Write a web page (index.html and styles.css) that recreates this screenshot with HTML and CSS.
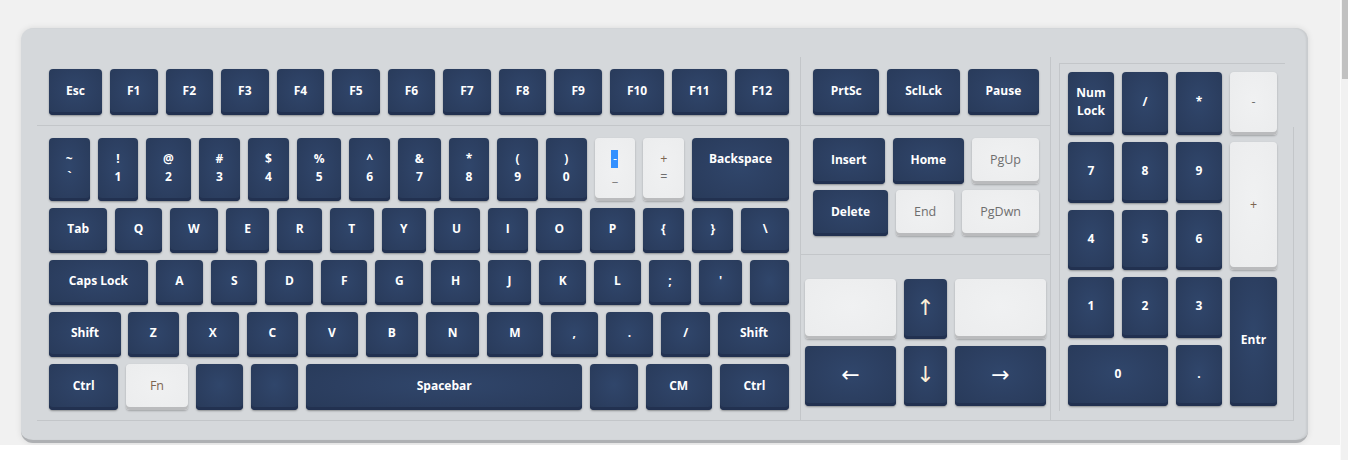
FILE: index.html
```html
<!DOCTYPE html>
<html>
<head>
<meta charset="utf-8">
<link rel="stylesheet" href="styles.css">
</head>
<body>
<div class="page">
  <div class="keyboard">
    <div class="deck">
      <div class="main-top">
        <div class="row fn-row">
          <div class="key">Esc</div>
          <div class="key">F1</div><div class="key">F2</div><div class="key">F3</div>
          <div class="key">F4</div><div class="key">F5</div><div class="key">F6</div>
          <div class="key">F7</div><div class="key">F8</div><div class="key">F9</div>
          <div class="key fx">F10</div><div class="key fx">F11</div><div class="key fx">F12</div>
        </div>
      </div>
      <div class="nav-top">
        <div class="row fn-row">
          <div class="key">PrtSc</div><div class="key">SclLck</div><div class="key">Pause</div>
        </div>
      </div>
      <div class="numcol">
        <div class="numframe">
          <div class="numpad">
            <div class="key two"><span>Num</span><span>Lock</span></div>
            <div class="key">/</div>
            <div class="key">*</div>
            <div class="key light">-</div>
            <div class="key">7</div><div class="key">8</div><div class="key">9</div>
            <div class="key light tall warm">+</div>
            <div class="key">4</div><div class="key">5</div><div class="key">6</div>
            <div class="key">1</div><div class="key">2</div><div class="key">3</div>
            <div class="key tall">Entr</div>
            <div class="key wide">0</div>
            <div class="key">.</div>
          </div>
        </div>
      </div>
      <div class="main-bottom">
        <div class="row num-row">
          <div class="key two"><span>~</span><span>`</span></div>
          <div class="key two"><span>!</span><span>1</span></div>
          <div class="key two"><span>@</span><span>2</span></div>
          <div class="key two"><span>#</span><span>3</span></div>
          <div class="key two"><span>$</span><span>4</span></div>
          <div class="key two"><span>%</span><span>5</span></div>
          <div class="key two"><span>^</span><span>6</span></div>
          <div class="key two"><span>&amp;</span><span>7</span></div>
          <div class="key two"><span>*</span><span>8</span></div>
          <div class="key two"><span>(</span><span>9</span></div>
          <div class="key two"><span>)</span><span>0</span></div>
          <div class="key two light"><span><span class="sel">-</span></span><span>_</span></div>
          <div class="key two light"><span class="warm">+</span><span>=</span></div>
          <div class="key two"><span>Backspace</span><span>&nbsp;</span></div>
        </div>
        <div class="row">
          <div class="key">Tab</div>
          <div class="key">Q</div><div class="key">W</div><div class="key">E</div><div class="key">R</div>
          <div class="key">T</div><div class="key">Y</div><div class="key">U</div><div class="key">I</div>
          <div class="key">O</div><div class="key">P</div><div class="key">{</div><div class="key">}</div>
          <div class="key bs">\</div>
        </div>
        <div class="row">
          <div class="key">Caps Lock</div>
          <div class="key">A</div><div class="key">S</div><div class="key">D</div><div class="key">F</div>
          <div class="key">G</div><div class="key">H</div><div class="key">J</div><div class="key">K</div>
          <div class="key">L</div><div class="key">;</div><div class="key">'</div><div class="key"></div>
        </div>
        <div class="row">
          <div class="key shift">Shift</div>
          <div class="key">Z</div><div class="key">X</div><div class="key">C</div><div class="key">V</div>
          <div class="key">B</div><div class="key">N</div><div class="key">M</div><div class="key">,</div>
          <div class="key">.</div><div class="key">/</div>
          <div class="key shift">Shift</div>
        </div>
        <div class="row last-row">
          <div class="key">Ctrl</div>
          <div class="key light warm">Fn</div>
          <div class="key"></div>
          <div class="key"></div>
          <div class="key space">Spacebar</div>
          <div class="key"></div>
          <div class="key">CM</div>
          <div class="key">Ctrl</div>
        </div>
      </div>
      <div class="nav-bottom">
        <div class="insdel">
          <div class="row nav-row">
            <div class="key">Insert</div><div class="key">Home</div><div class="key light">PgUp</div>
          </div>
          <div class="row nav-row">
            <div class="key">Delete</div><div class="key light">End</div><div class="key light">PgDwn</div>
          </div>
        </div>
        <div class="arrows">
          <div class="key light"></div>
          <div class="key arrow tint">↑</div>
          <div class="key light"></div>
          <div class="key arrow">←</div>
          <div class="key arrow tint">↓</div>
          <div class="key arrow">→</div>
        </div>
      </div>
    </div>
  </div>
</div>
<div class="scrollbar"><div class="thumb"></div></div>
</body>
</html>
```
FILE: styles.css
```css
html { background: #ffffff; }
body {
  margin: 0;
  font-family: "Open Sans", "DejaVu Sans", sans-serif;
  overflow: hidden;
}
.page {
  height: 445px;
  box-sizing: border-box;
  padding: 28px 0 0 21px;
  background: #f1f1f1;
}
.keyboard {
  width: 1287px;
  box-sizing: border-box;
  padding: 29px 14px 19px 16px;
  background: #d5d8db;
  border-radius: 12px;
  border-bottom: 3px solid #aeb0b3;
  box-shadow: 0 0 6px rgba(0,0,0,0.10), inset -2px 0 2px rgba(0,0,0,0.06);
}
.deck {
  display: grid;
  grid-template-columns: 763px 250px 244px;
  grid-template-rows: 68px 295px;
  border-bottom: 1px solid #c3c6c9;
}
.main-top {
  padding: 12px 11px 10px 12px;
}
.nav-top {
  border-left: 1px solid #c3c6c9;
  padding: 12px 11px 10px 12px;
}
.numcol {
  grid-column: 3;
  grid-row: 1 / 3;
  border-left: 1px solid #c3c6c9;
  background: linear-gradient(#c3c6c9, #c3c6c9) no-repeat right bottom / 1px calc(100% - 70px);
}
.main-bottom {
  grid-column: 1;
  grid-row: 2;
  border-top: 1px solid #c3c6c9;
  padding: 12px 11px 10px 12px;
  display: flex;
  flex-direction: column;
  gap: 7px;
}
.nav-bottom {
  grid-column: 2;
  grid-row: 2;
  border-top: 1px solid #c3c6c9;
  border-left: 1px solid #c3c6c9;
}
.row {
  display: flex;
  gap: 8px;
  height: 45px;
}
.fn-row { height: 46px; }
.num-row { height: 63px; }
.last-row { height: 46px; }
.insdel {
  padding: 12px 11px 18px 12px;
  border-bottom: 1px solid #c3c6c9;
  display: flex;
  flex-direction: column;
  gap: 6px;
}
.nav-row { height: 46px; }
.arrows {
  padding: 24px 4px 0 4px;
  display: grid;
  grid-template-columns: 91px 43px 91px;
  grid-template-rows: 60px 60px;
  column-gap: 8px;
  row-gap: 7px;
}
.numframe {
  margin: 6px 0 0 8px;
  width: 226px;
  box-sizing: border-box;
  border-top: 1px solid #c3c6c9;
  border-left: 1px solid #c3c6c9;
  padding: 8px 8px 5px 8px;
}
.numpad {
  display: grid;
  grid-template-columns: 46px 46px 46px 47px;
  grid-template-rows: 63px 61px 60px 61px 61px;
  gap: 7px 8px;
}
.numpad .tall { grid-row: span 2; }
.numpad .wide { grid-column: span 2; }

.key {
  flex: 1 1 auto;
  box-sizing: border-box;
  display: flex;
  flex-direction: column;
  align-items: center;
  justify-content: center;
  padding-bottom: 3px;
  border-radius: 4px;
  background: radial-gradient(ellipse at 50% 45%, #30466b 0%, #2c3f61 55%, #283a59 100%);
  box-shadow: inset 0 -3px 0 #223150, 0 1px 2px rgba(0,0,0,0.35);
  color: #ffffff;
  font-size: 12px;
  font-weight: 700;
  line-height: 18px;
  white-space: nowrap;
}
.key.light {
  background: radial-gradient(ellipse at 50% 45%, #f0f1f2 0%, #ebeced 100%);
  box-shadow: inset 0 -3px 0 #babbbd, 0 1px 2px rgba(0,0,0,0.25);
  color: #6e6e6e;
  font-weight: 400;
  font-size: 12.5px;
}
.key.light.warm, .warm { color: #7d6650; }
.key.bs { padding-left: 3px; padding-right: 3px; }
.key.shift { margin-right: -1px; }
.key.space { flex: 0 0 276px; }
.key.arrow {
  font-family: "DejaVu Sans", sans-serif;
  font-weight: 400;
  font-size: 22px;
  transform: none;
}
.key.arrow.tint { color: #fbf0d8; }
.sel {
  background: #3390ff;
  color: #ffffff;
  display: inline-block;
  width: 7px;
  text-align: center;
}
.scrollbar {
  position: fixed;
  top: 0;
  right: 0;
  width: 7px;
  height: 460px;
  background: #f1f1f1;
  border-left: 1px solid #fafafa;
}
.thumb {
  margin-left: 1px;
  width: 6px;
  height: 79px;
  background: #c1c1c1;
}
```
